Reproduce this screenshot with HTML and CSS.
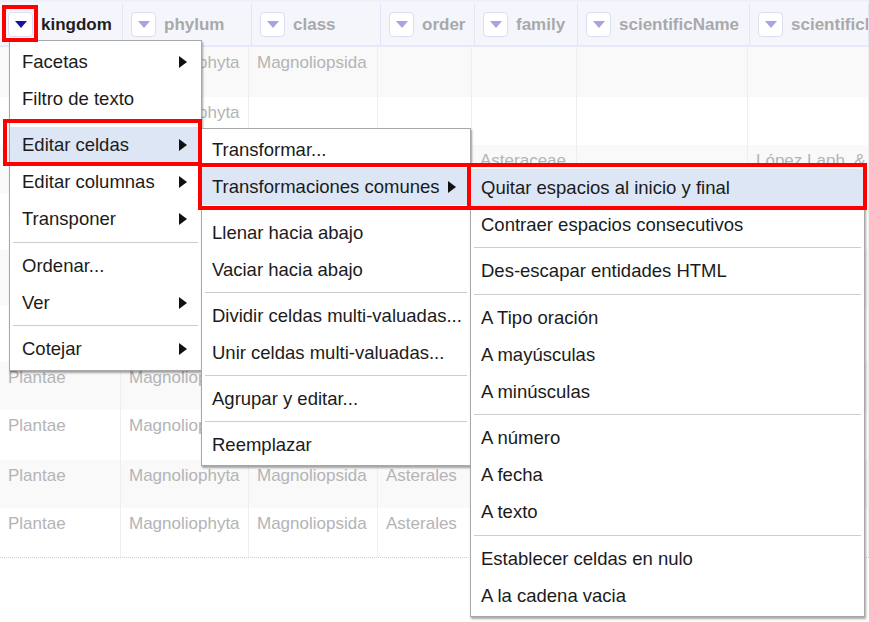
FILE: index.html
```html
<!DOCTYPE html>
<html lang="es">
<head>
<meta charset="utf-8">
<title>OpenRefine menu</title>
<link rel="stylesheet" href="styles.css">
</head>
<body>
<div class="sheet">
  <div class="head">
    <div class="hcell active"><span class="drop"><i></i></span>kingdom</div>
    <div class="hcell"><span class="drop"><i></i></span>phylum</div>
    <div class="hcell"><span class="drop"><i></i></span>class</div>
    <div class="hcell"><span class="drop"><i></i></span>order</div>
    <div class="hcell"><span class="drop"><i></i></span>family</div>
    <div class="hcell"><span class="drop"><i></i></span>scientificName</div>
    <div class="hcell"><span class="drop"><i></i></span>scientificNameAuthorship</div>
  </div>
  <div class="rows">
    <div class="row odd h50"><div class="cell">Plantae</div><div class="cell">Magnoliophyta</div><div class="cell">Magnoliopsida</div><div class="cell"></div><div class="cell"></div><div class="cell"></div><div class="cell"></div></div>
    <div class="row h48"><div class="cell">Plantae</div><div class="cell">Magnoliophyta</div><div class="cell"></div><div class="cell"></div><div class="cell"></div><div class="cell"></div><div class="cell"></div></div>
    <div class="row odd h49"><div class="cell">Plantae</div><div class="cell">Magnoliophyta</div><div class="cell">Magnoliopsida</div><div class="cell">Asterales</div><div class="cell">Asteraceae</div><div class="cell"></div><div class="cell">López Laph. &amp; Muñoz</div></div>
    <div class="row h56"><div class="cell">Plantae</div><div class="cell">Magnoliophyta</div><div class="cell">Magnoliopsida</div><div class="cell">Asterales</div><div class="cell">Asteraceae</div><div class="cell"></div><div class="cell"></div></div>
    <div class="row odd h56"><div class="cell">Plantae</div><div class="cell">Magnoliophyta</div><div class="cell">Magnoliopsida</div><div class="cell">Asterales</div><div class="cell">Asteraceae</div><div class="cell"></div><div class="cell"></div></div>
    <div class="row h56"><div class="cell">Plantae</div><div class="cell">Magnoliophyta</div><div class="cell">Magnoliopsida</div><div class="cell">Asterales</div><div class="cell">Asteraceae</div><div class="cell"></div><div class="cell"></div></div>
    <div class="row odd h48"><div class="cell">Plantae</div><div class="cell">Magnoliophyta</div><div class="cell">Magnoliopsida</div><div class="cell">Asterales</div><div class="cell">Asteraceae</div><div class="cell"></div><div class="cell"></div></div>
    <div class="row h50"><div class="cell">Plantae</div><div class="cell">Magnoliophyta</div><div class="cell">Magnoliopsida</div><div class="cell">Asterales</div><div class="cell">Asteraceae</div><div class="cell"></div><div class="cell"></div></div>
    <div class="row odd h48"><div class="cell">Plantae</div><div class="cell">Magnoliophyta</div><div class="cell">Magnoliopsida</div><div class="cell">Asterales</div><div class="cell">Asteraceae</div><div class="cell"></div><div class="cell"></div></div>
    <div class="row h50 last"><div class="cell">Plantae</div><div class="cell">Magnoliophyta</div><div class="cell">Magnoliopsida</div><div class="cell">Asterales</div><div class="cell">Asteraceae</div><div class="cell"></div><div class="cell"></div></div>
  </div>
</div>

<div class="menu m1">
  <div class="item">Facetas<span class="arrow"></span></div>
  <div class="item">Filtro de texto</div>
  <div class="sep"></div>
  <div class="item hl">Editar celdas<span class="arrow"></span></div>
  <div class="item">Editar columnas<span class="arrow"></span></div>
  <div class="item">Transponer<span class="arrow"></span></div>
  <div class="sep"></div>
  <div class="item">Ordenar...</div>
  <div class="item">Ver<span class="arrow"></span></div>
  <div class="sep"></div>
  <div class="item">Cotejar<span class="arrow"></span></div>
</div>

<div class="menu m2">
  <div class="item">Transformar...</div>
  <div class="item hl">Transformaciones comunes<span class="arrow"></span></div>
  <div class="sep"></div>
  <div class="item">Llenar hacia abajo</div>
  <div class="item">Vaciar hacia abajo</div>
  <div class="sep"></div>
  <div class="item">Dividir celdas multi-valuadas...</div>
  <div class="item">Unir celdas multi-valuadas...</div>
  <div class="sep"></div>
  <div class="item">Agrupar y editar...</div>
  <div class="sep"></div>
  <div class="item">Reemplazar</div>
</div>

<div class="menu m3">
  <div class="item hl">Quitar espacios al inicio y final</div>
  <div class="item">Contraer espacios consecutivos</div>
  <div class="sep"></div>
  <div class="item">Des-escapar entidades HTML</div>
  <div class="sep"></div>
  <div class="item">A Tipo oración</div>
  <div class="item">A mayúsculas</div>
  <div class="item">A minúsculas</div>
  <div class="sep"></div>
  <div class="item">A número</div>
  <div class="item">A fecha</div>
  <div class="item">A texto</div>
  <div class="sep"></div>
  <div class="item">Establecer celdas en nulo</div>
  <div class="item">A la cadena vacia</div>
</div>

<div class="mark mk1"></div>
<div class="mark mk2"></div>
<div class="mark mk3"></div>
<div class="mark mk4"></div>
</body>
</html>
```

FILE: styles.css
```css
html, body {
  margin: 0;
  padding: 0;
}
body {
  width: 869px;
  height: 622px;
  overflow: hidden;
  position: relative;
  background: #fff;
  font-family: "Liberation Sans", Arial, sans-serif;
}

.sheet {
  width: 869px;
  overflow: hidden;
}

.head {
  display: grid;
  grid-template-columns: 123px 129px 129px 94px 103px 172px 1fr;
  height: 47px;
  box-sizing: border-box;
  padding-top: 2px;
  background: #f5f6fc;
  border-top: 2px solid #eef0fa;
  border-bottom: 2px solid #e6e9f8;
}
.hcell {
  display: flex;
  align-items: center;
  gap: 8px;
  padding-left: 8px;
  border-right: 1px solid #e2e5f6;
  font-size: 17px;
  font-weight: bold;
  color: #a9a9a9;
  white-space: nowrap;
  overflow: hidden;
}
.hcell.active {
  color: #1e1e1e;
}
.drop {
  flex: none;
  width: 25px;
  height: 25px;
  box-sizing: border-box;
  background: #fff;
  border: 1px solid #dcdff2;
  border-radius: 4px;
  display: flex;
  align-items: center;
  justify-content: center;
}
.drop i {
  width: 0;
  height: 0;
  border-left: 6px solid transparent;
  border-right: 6px solid transparent;
  border-top: 7px solid #a9a3e3;
}
.active .drop i {
  border-top-color: #15159c;
}

.row {
  display: grid;
  grid-template-columns: 121px 128px 129px 94px 105px 171px 1fr;
  box-sizing: border-box;
}
.row.odd {
  background: #f9f9f9;
}
.row.last {
  border-bottom: 1px dotted #cfcfcf;
}
.h48 { height: 48px; }
.h49 { height: 49px; }
.h50 { height: 50px; }
.h56 { height: 56px; }
.cell {
  padding: 6px 8px 0;
  font-size: 17px;
  line-height: 19px;
  color: #b4b4b4;
  border-right: 1px solid #eeeeee;
  white-space: nowrap;
  overflow: hidden;
}

.menu {
  position: absolute;
  box-sizing: border-box;
  background: #fff;
  border: 1px solid #a8a8a8;
  box-shadow: 1px 2px 2px rgba(0, 0, 0, 0.35);
  padding: 2px 0;
  font-size: 18.5px;
  color: #1b1b1b;
}
.m1 { left: 9px; top: 40px; width: 193px; }
.m2 { left: 201px; top: 128px; width: 270px; }
.m3 { left: 470px; top: 166px; width: 395px; }

.item {
  height: 37px;
  display: flex;
  align-items: center;
  justify-content: space-between;
  padding: 0 14px 0 10px;
  white-space: nowrap;
}
.m1 .item {
  padding-left: 12px;
}
.item.hl {
  background: #dce6f5;
}
.arrow {
  flex: none;
  width: 0;
  height: 0;
  border-left: 8px solid #111;
  border-top: 6px solid transparent;
  border-bottom: 6px solid transparent;
}
.sep {
  border-top: 1px solid #cdcdcd;
  margin: 4px 3px 4.5px;
}
.m2 .sep {
  margin: 4px 3px 4px;
}

.mark {
  position: absolute;
  box-sizing: border-box;
  border: 4px solid #ff0000;
}
.mk1 { left: 2px; top: 5px; width: 36px; height: 37px; }
.mk2 { left: 3px; top: 119px; width: 199px; height: 47px; }
.mk3 { left: 198px; top: 163px; width: 273px; height: 47px; }
.mk4 { left: 467px; top: 163px; width: 400px; height: 47px; }
```
